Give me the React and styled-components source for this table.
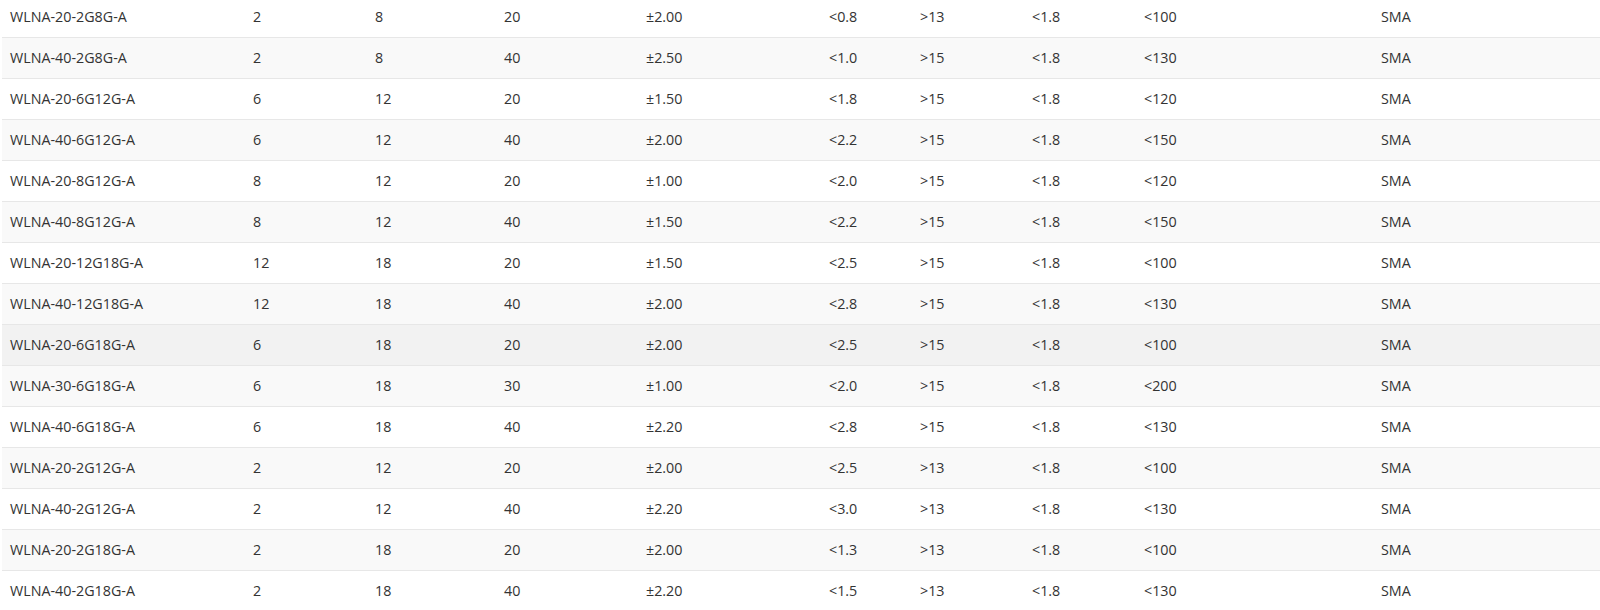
import React from 'react'
import styled, { createGlobalStyle } from 'styled-components'

const GlobalStyle = createGlobalStyle`
  html, body {
    margin: 0;
    padding: 0;
    background: #fff;
    overflow: hidden;
  }
  body {
    font-family: "Open Sans", "Noto Sans", sans-serif;
    color: #333;
  }
`

const Wrap = styled.div`
  margin: -4px 0 0 2px;
  width: 1611px;
`

const Table = styled.table`
  width: 100%;
  table-layout: fixed;
  border-collapse: collapse;
  font-size: 14.3px;
`

const Row = styled.tr`
  height: 41px;
  border-bottom: 1px solid #e7e7e7;
  background: ${p => (p.$hover ? '#f2f2f2' : p.$odd ? '#f9f9f9' : '#fff')};
`

const Cell = styled.td`
  padding: 0 8px;
  vertical-align: middle;
  white-space: nowrap;
`

const widths = [243, 122, 129, 142, 183, 91, 112, 112, 237, 240]

const rows = [
  ['WLNA-20-2G8G-A', '2', '8', '20', '±2.00', '<0.8', '>13', '<1.8', '<100', 'SMA'],
  ['WLNA-40-2G8G-A', '2', '8', '40', '±2.50', '<1.0', '>15', '<1.8', '<130', 'SMA'],
  ['WLNA-20-6G12G-A', '6', '12', '20', '±1.50', '<1.8', '>15', '<1.8', '<120', 'SMA'],
  ['WLNA-40-6G12G-A', '6', '12', '40', '±2.00', '<2.2', '>15', '<1.8', '<150', 'SMA'],
  ['WLNA-20-8G12G-A', '8', '12', '20', '±1.00', '<2.0', '>15', '<1.8', '<120', 'SMA'],
  ['WLNA-40-8G12G-A', '8', '12', '40', '±1.50', '<2.2', '>15', '<1.8', '<150', 'SMA'],
  ['WLNA-20-12G18G-A', '12', '18', '20', '±1.50', '<2.5', '>15', '<1.8', '<100', 'SMA'],
  ['WLNA-40-12G18G-A', '12', '18', '40', '±2.00', '<2.8', '>15', '<1.8', '<130', 'SMA'],
  ['WLNA-20-6G18G-A', '6', '18', '20', '±2.00', '<2.5', '>15', '<1.8', '<100', 'SMA'],
  ['WLNA-30-6G18G-A', '6', '18', '30', '±1.00', '<2.0', '>15', '<1.8', '<200', 'SMA'],
  ['WLNA-40-6G18G-A', '6', '18', '40', '±2.20', '<2.8', '>15', '<1.8', '<130', 'SMA'],
  ['WLNA-20-2G12G-A', '2', '12', '20', '±2.00', '<2.5', '>13', '<1.8', '<100', 'SMA'],
  ['WLNA-40-2G12G-A', '2', '12', '40', '±2.20', '<3.0', '>13', '<1.8', '<130', 'SMA'],
  ['WLNA-20-2G18G-A', '2', '18', '20', '±2.00', '<1.3', '>13', '<1.8', '<100', 'SMA'],
  ['WLNA-40-2G18G-A', '2', '18', '40', '±2.20', '<1.5', '>13', '<1.8', '<130', 'SMA'],
]

export default function App() {
  return (
    <>
      <GlobalStyle />
      <Wrap>
        <Table>
          <colgroup>
            {widths.map((w, i) => <col key={i} style={{ width: w }} />)}
          </colgroup>
          <tbody>
            {rows.map((r, i) => (
              // the 9th row is the one under the mouse
              <Row key={r[0]} $odd={i % 2 === 1} $hover={i === 8}>
                {r.map((c, j) => <Cell key={j}>{c}</Cell>)}
              </Row>
            ))}
          </tbody>
        </Table>
      </Wrap>
    </>
  )
}
